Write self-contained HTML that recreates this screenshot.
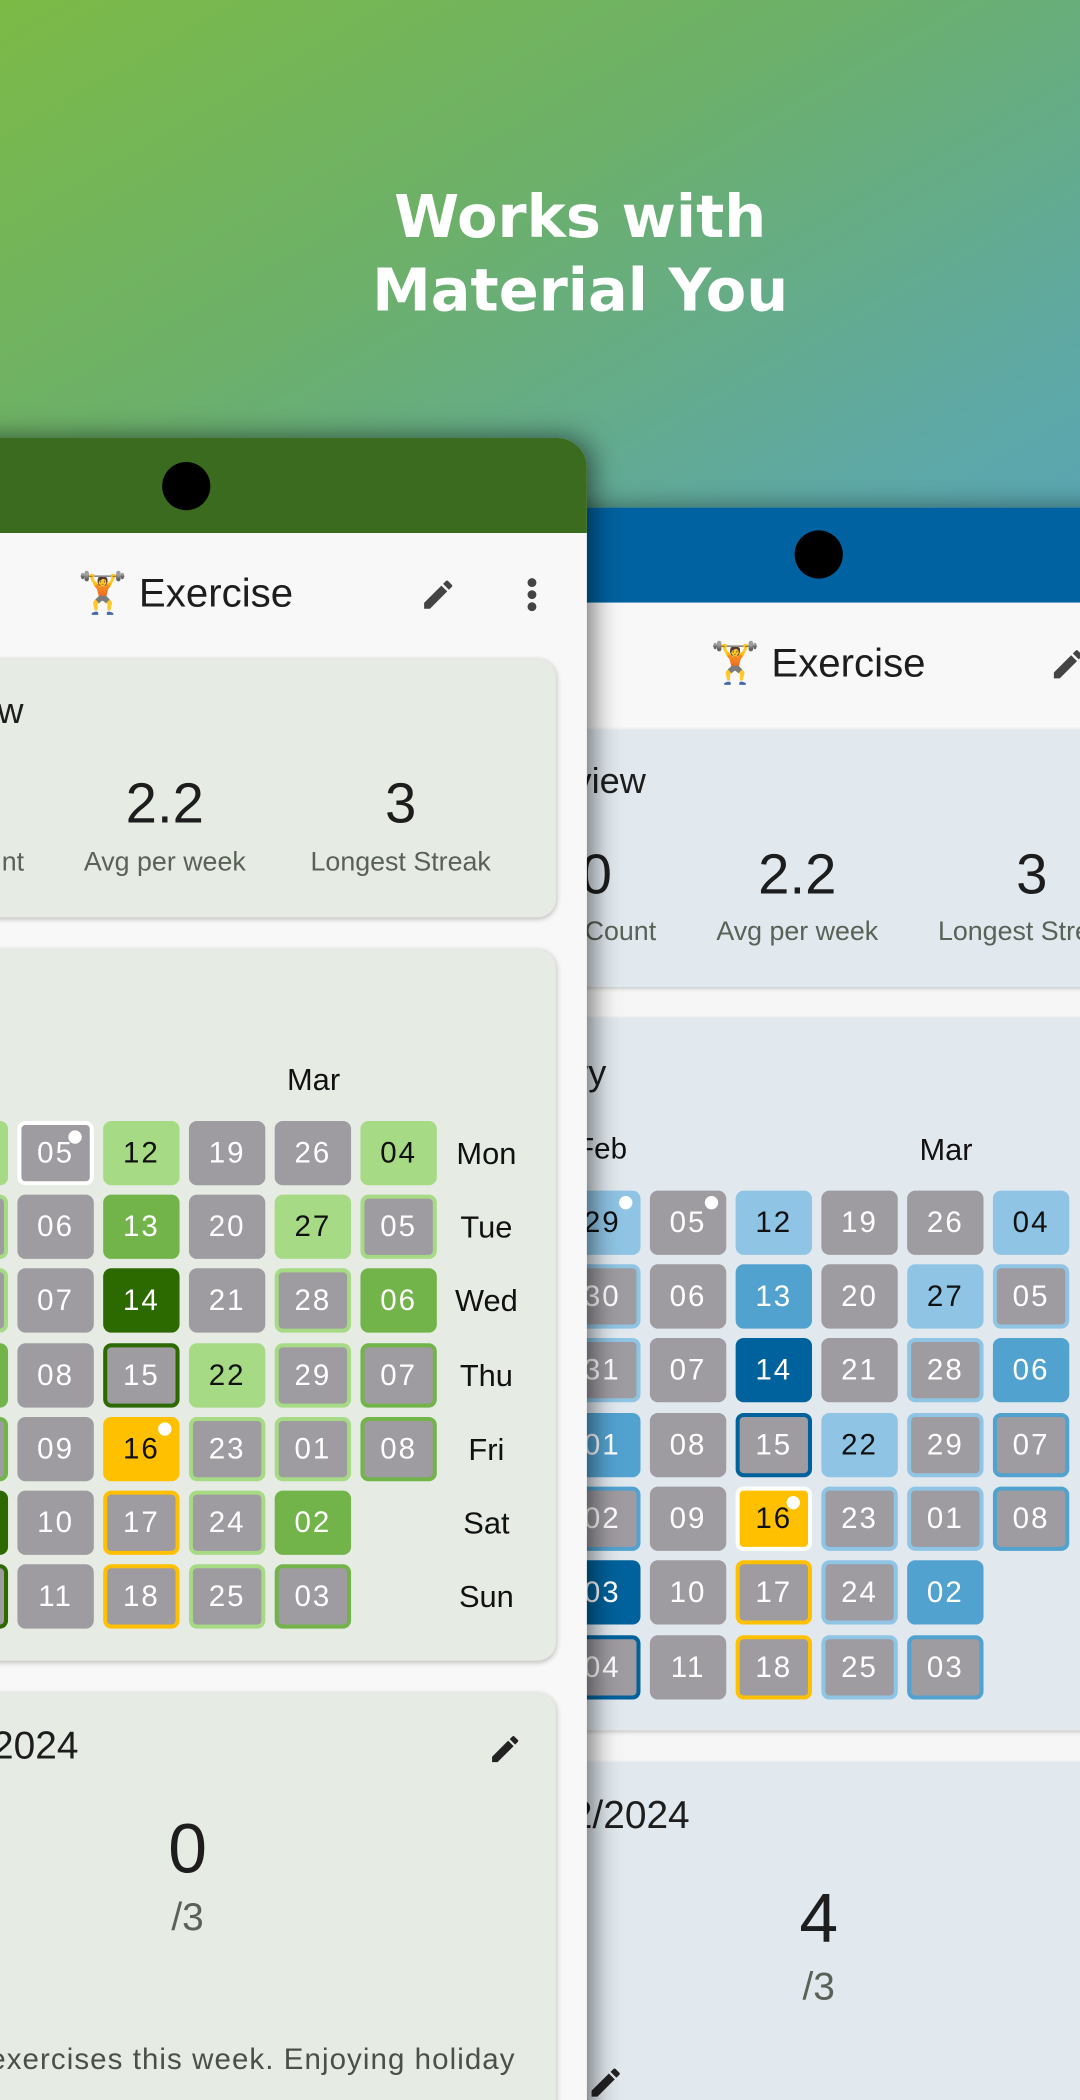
<!DOCTYPE html>
<html><head><meta charset="utf-8"><style>
html,body{margin:0;padding:0;width:1080px;height:2100px;overflow:hidden}
#s{position:absolute;left:0;top:0;width:806px;height:1568px;transform:scale(1.33995,1.33929);transform-origin:0 0;overflow:hidden;
background:linear-gradient(150deg,#7cba46 0%,#6cb06a 18%,#5ea8a6 36%,#52a2c6 52%,#4a9fd0 100%);font-family:"Liberation Sans",sans-serif}
.a{position:absolute}
.c{position:absolute;width:57px;height:48px;border-radius:6px;font-size:22px;display:flex;align-items:center;justify-content:center;color:#fff;box-sizing:border-box;background:#9e9ba1;letter-spacing:1.5px}
.k{color:#111}
.dot{position:absolute;right:6px;top:4px;width:10px;height:10px;border-radius:50%;background:#fff}
.lbl{position:absolute;font-size:23px;color:#111;width:70px;text-align:center}
.big{position:absolute;font-size:42px;color:#1d1d1d;text-align:center}
.sm{position:absolute;font-size:20px;color:#5a6156;text-align:center}
</style></head><body><div id="s">

<div class="a" style="left:0;width:866px;top:135px;text-align:center;color:#fff;font:bold 44px 'DejaVu Sans',sans-serif;line-height:55px">Works with<br>Material You</div>

<!-- RIGHT PHONE -->
<div class="a" style="left:380px;top:379px;width:460px;height:1250px;background:#f6f6f6;box-shadow:0 0 18px rgba(0,0,0,.45)"></div>
<div class="a" style="left:380px;top:379px;width:460px;height:71px;background:#0062a0"></div>
<div class="a" style="left:593px;top:396px;width:36px;height:36px;border-radius:50%;background:#000"></div>
<div class="a" style="left:380px;top:450px;width:460px;height:93px;background:#f8f8f8"></div>
<div class="a" style="left:530px;top:478px;font-size:30px;color:#1d1d1d">🏋️ Exercise</div>
<svg class="a" style="left:783px;top:482px" width="28" height="28" viewBox="0 0 24 24"><path fill="#444" d="M3 17.25V21h3.75L17.81 9.94l-3.75-3.75L3 17.25zM20.71 7.04a1 1 0 000-1.41l-2.34-2.34a1 1 0 00-1.41 0l-1.830 1.83 3.75 3.75 1.83-1.83z"/></svg>

<div class="a" style="left:380px;top:545px;width:460px;height:192px;background:#e1e9ef;border-radius:14px;box-shadow:0 1px 3px rgba(0,0,0,.2)"></div>
<div class="a" style="left:428px;top:568px;font-size:27px;color:#1d1d1d">view</div>
<div class="big" style="left:400px;width:90px;top:629px">0</div>
<div class="sm" style="left:400px;width:126px;top:685px">Count</div>
<div class="big" style="left:535px;width:120px;top:629px">2.2</div>
<div class="sm" style="left:515px;width:160px;top:685px">Avg per week</div>
<div class="big" style="left:730px;width:80px;top:629px">3</div>
<div class="sm" style="left:700px;width:170px;top:685px;text-align:left">Longest Streak</div>

<div class="a" style="left:380px;top:760px;width:460px;height:532px;background:#e1e9ef;border-radius:14px;box-shadow:0 1px 3px rgba(0,0,0,.2)"></div>
<div class="a" style="left:430px;top:786px;font-size:27px;color:#1d1d1d">ry</div>
<div class="a" style="left:430px;top:845px;font-size:22px;color:#111">Feb</div>
<div class="lbl" style="left:671px;top:845px">Mar</div>

<div class="c k" style="left:421px;top:889px;background:#8fc4e4">29<span class="dot"></span></div>
<div class="c" style="left:421px;top:944px;border:3px solid #8fc4e4">30</div>
<div class="c" style="left:421px;top:999px;border:3px solid #8fc4e4">31</div>
<div class="c" style="left:421px;top:1055px;background:#52a2d0">01</div>
<div class="c" style="left:421px;top:1110px;border:3px solid #52a2d0">02</div>
<div class="c" style="left:421px;top:1165px;background:#00629c">03</div>
<div class="c" style="left:421px;top:1221px;border:3px solid #00629c">04</div>

<div class="c" style="left:485px;top:889px">05<span class="dot"></span></div>
<div class="c" style="left:485px;top:944px">06</div>
<div class="c" style="left:485px;top:999px">07</div>
<div class="c" style="left:485px;top:1055px">08</div>
<div class="c" style="left:485px;top:1110px">09</div>
<div class="c" style="left:485px;top:1165px">10</div>
<div class="c" style="left:485px;top:1221px">11</div>

<div class="c k" style="left:549px;top:889px;background:#8fc4e4">12</div>
<div class="c" style="left:549px;top:944px;background:#52a2d0">13</div>
<div class="c" style="left:549px;top:999px;background:#00629c">14</div>
<div class="c" style="left:549px;top:1055px;border:3px solid #00629c">15</div>
<div class="c k" style="left:549px;top:1110px;background:#ffc000;border:3px solid #fff">16<span class="dot"></span></div>
<div class="c" style="left:549px;top:1165px;border:3px solid #ffc000">17</div>
<div class="c" style="left:549px;top:1221px;border:3px solid #ffc000">18</div>

<div class="c" style="left:613px;top:889px">19</div>
<div class="c" style="left:613px;top:944px">20</div>
<div class="c" style="left:613px;top:999px">21</div>
<div class="c k" style="left:613px;top:1055px;background:#8fc4e4">22</div>
<div class="c" style="left:613px;top:1110px;border:3px solid #8fc4e4">23</div>
<div class="c" style="left:613px;top:1165px;border:3px solid #8fc4e4">24</div>
<div class="c" style="left:613px;top:1221px;border:3px solid #8fc4e4">25</div>

<div class="c" style="left:677px;top:889px">26</div>
<div class="c k" style="left:677px;top:944px;background:#8fc4e4">27</div>
<div class="c" style="left:677px;top:999px;border:3px solid #8fc4e4">28</div>
<div class="c" style="left:677px;top:1055px;border:3px solid #8fc4e4">29</div>
<div class="c" style="left:677px;top:1110px;border:3px solid #8fc4e4">01</div>
<div class="c" style="left:677px;top:1165px;background:#52a2d0">02</div>
<div class="c" style="left:677px;top:1221px;border:3px solid #52a2d0">03</div>

<div class="c k" style="left:741px;top:889px;background:#8fc4e4">04</div>
<div class="c" style="left:741px;top:944px;border:3px solid #8fc4e4">05</div>
<div class="c" style="left:741px;top:999px;background:#52a2d0">06</div>
<div class="c" style="left:741px;top:1055px;border:3px solid #52a2d0">07</div>
<div class="c" style="left:741px;top:1110px;border:3px solid #52a2d0">08</div>

<div class="a" style="left:380px;top:1316px;width:460px;height:300px;background:#e1e9ef;border-radius:14px;box-shadow:0 1px 3px rgba(0,0,0,.2)"></div>
<div class="a" style="left:426px;top:1340px;font-size:29px;color:#1d1d1d">2/2024</div>
<div class="big" style="left:571px;width:80px;top:1403px;font-size:52px">4</div>
<div class="a" style="left:571px;width:80px;top:1468px;font-size:29px;color:#5a6156;text-align:center">/3</div>
<svg class="a" style="left:438px;top:1541px" width="28" height="28" viewBox="0 0 24 24"><path fill="#222" d="M3 17.25V21h3.75L17.81 9.94l-3.75-3.75L3 17.25zM20.71 7.04a1 1 0 000-1.41l-2.34-2.34a1 1 0 00-1.41 0l-1.83 1.83 3.75 3.75 1.83-1.83z"/></svg>

<!-- LEFT PHONE -->
<div class="a" style="left:-300px;top:327px;width:738px;height:1300px;background:#f8f8f8;border-radius:0 22px 0 0;box-shadow:4px 0 20px rgba(0,0,0,.55)"></div>
<div class="a" style="left:-300px;top:327px;width:738px;height:71px;background:#3b6b1e;border-radius:0 22px 0 0"></div>
<div class="a" style="left:121px;top:345px;width:36px;height:36px;border-radius:50%;background:#000"></div>
<div class="a" style="left:58px;top:426px;font-size:30px;color:#1d1d1d">🏋️ Exercise</div>
<svg class="a" style="left:313px;top:430px" width="28" height="28" viewBox="0 0 24 24"><path fill="#444" d="M3 17.25V21h3.75L17.81 9.94l-3.75-3.75L3 17.25zM20.71 7.04a1 1 0 000-1.41l-2.34-2.34a1 1 0 00-1.41 0l-1.83 1.83 3.75 3.75 1.83-1.83z"/></svg>
<svg class="a" style="left:385px;top:430px" width="24" height="28" viewBox="0 0 24 28"><circle cx="12" cy="5" r="3.3" fill="#444"/><circle cx="12" cy="14" r="3.3" fill="#444"/><circle cx="12" cy="23" r="3.3" fill="#444"/></svg>

<div class="a" style="left:-40px;top:492px;width:455px;height:193px;background:#e6ece4;border-radius:14px;box-shadow:0 1px 4px rgba(0,0,0,.25)"></div>
<div class="a" style="left:-2px;top:516px;font-size:27px;color:#1d1d1d">w</div>
<div class="sm" style="left:-60px;width:78px;top:633px;text-align:right">nt</div>
<div class="big" style="left:63px;width:120px;top:576px">2.2</div>
<div class="sm" style="left:43px;width:160px;top:633px">Avg per week</div>
<div class="big" style="left:259px;width:80px;top:576px">3</div>
<div class="sm" style="left:209px;width:180px;top:633px">Longest Streak</div>

<div class="a" style="left:-40px;top:709px;width:455px;height:531px;background:#e6ece4;border-radius:14px;box-shadow:0 1px 4px rgba(0,0,0,.25)"></div>
<div class="lbl" style="left:199px;top:793px">Mar</div>
<div class="lbl" style="left:328px;top:848px">Mon</div>
<div class="lbl" style="left:328px;top:903px">Tue</div>
<div class="lbl" style="left:328px;top:958px">Wed</div>
<div class="lbl" style="left:328px;top:1014px">Thu</div>
<div class="lbl" style="left:328px;top:1069px">Fri</div>
<div class="lbl" style="left:328px;top:1124px">Sat</div>
<div class="lbl" style="left:328px;top:1179px">Sun</div>

<div class="c k" style="left:-51px;top:837px;background:#a6da84">29</div>
<div class="c" style="left:-51px;top:892px;border:3px solid #a6da84">30</div>
<div class="c" style="left:-51px;top:947px;border:3px solid #a6da84">31</div>
<div class="c" style="left:-51px;top:1003px;background:#72b44a">01</div>
<div class="c" style="left:-51px;top:1058px;border:3px solid #72b44a">02</div>
<div class="c" style="left:-51px;top:1113px;background:#2c6a00">03</div>
<div class="c" style="left:-51px;top:1168px;border:3px solid #2c6a00">04</div>

<div class="c" style="left:13px;top:837px;border:3px solid #fff">05<span class="dot"></span></div>
<div class="c" style="left:13px;top:892px">06</div>
<div class="c" style="left:13px;top:947px">07</div>
<div class="c" style="left:13px;top:1003px">08</div>
<div class="c" style="left:13px;top:1058px">09</div>
<div class="c" style="left:13px;top:1113px">10</div>
<div class="c" style="left:13px;top:1168px">11</div>

<div class="c k" style="left:77px;top:837px;background:#a6da84">12</div>
<div class="c" style="left:77px;top:892px;background:#72b44a">13</div>
<div class="c" style="left:77px;top:947px;background:#2c6a00">14</div>
<div class="c" style="left:77px;top:1003px;border:3px solid #2c6a00">15</div>
<div class="c k" style="left:77px;top:1058px;background:#ffc000">16<span class="dot"></span></div>
<div class="c" style="left:77px;top:1113px;border:3px solid #ffc000">17</div>
<div class="c" style="left:77px;top:1168px;border:3px solid #ffc000">18</div>

<div class="c" style="left:141px;top:837px">19</div>
<div class="c" style="left:141px;top:892px">20</div>
<div class="c" style="left:141px;top:947px">21</div>
<div class="c k" style="left:141px;top:1003px;background:#a6da84">22</div>
<div class="c" style="left:141px;top:1058px;border:3px solid #a6da84">23</div>
<div class="c" style="left:141px;top:1113px;border:3px solid #a6da84">24</div>
<div class="c" style="left:141px;top:1168px;border:3px solid #a6da84">25</div>

<div class="c" style="left:205px;top:837px">26</div>
<div class="c k" style="left:205px;top:892px;background:#a6da84">27</div>
<div class="c" style="left:205px;top:947px;border:3px solid #a6da84">28</div>
<div class="c" style="left:205px;top:1003px;border:3px solid #a6da84">29</div>
<div class="c" style="left:205px;top:1058px;border:3px solid #a6da84">01</div>
<div class="c" style="left:205px;top:1113px;background:#72b44a">02</div>
<div class="c" style="left:205px;top:1168px;border:3px solid #72b44a">03</div>

<div class="c k" style="left:269px;top:837px;background:#a6da84">04</div>
<div class="c" style="left:269px;top:892px;border:3px solid #a6da84">05</div>
<div class="c" style="left:269px;top:947px;background:#72b44a">06</div>
<div class="c" style="left:269px;top:1003px;border:3px solid #72b44a">07</div>
<div class="c" style="left:269px;top:1058px;border:3px solid #72b44a">08</div>

<div class="a" style="left:-40px;top:1264px;width:455px;height:360px;background:#e6ece4;border-radius:14px;box-shadow:0 1px 4px rgba(0,0,0,.25)"></div>
<div class="a" style="left:-14px;top:1288px;font-size:29px;color:#1d1d1d">/2024</div>
<svg class="a" style="left:364px;top:1293px" width="26" height="26" viewBox="0 0 24 24"><path fill="#222" d="M3 17.25V21h3.75L17.81 9.94l-3.75-3.75L3 17.25zM20.71 7.04a1 1 0 000-1.41l-2.34-2.34a1 1 0 00-1.41 0l-1.83 1.83 3.75 3.75 1.83-1.83z"/></svg>
<div class="big" style="left:100px;width:80px;top:1351px;font-size:52px">0</div>
<div class="a" style="left:100px;width:80px;top:1416px;font-size:29px;color:#5a6156;text-align:center">/3</div>
<div class="a" style="left:-8px;top:1525px;font-size:22px;color:#4a5046;white-space:nowrap;letter-spacing:0.8px">exercises this week. Enjoying holiday</div>

</div></body></html>
